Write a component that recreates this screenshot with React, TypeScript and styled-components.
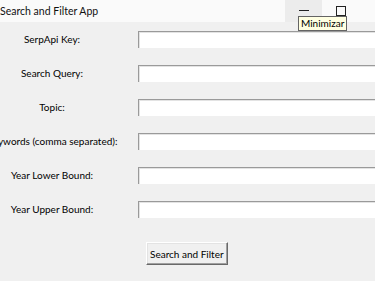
import * as React from "react";
import styled, { createGlobalStyle } from "styled-components";

const Global = createGlobalStyle`
  html, body {
    margin: 0;
    padding: 0;
    background: #f0f0f0;
    overflow: hidden;
  }
  body {
    font-family: Lato, "Noto Sans", sans-serif;
    font-size: 10px;
    color: #000;
  }
`;

const Window = styled.div`
  width: 375px;
  height: 281px;
  display: flex;
  flex-direction: column;
  background: #f0f0f0;
  overflow: hidden;
`;

const TitleBar = styled.div`
  position: relative;
  height: 22px;
  flex: none;
  display: flex;
  align-items: center;
  background: #fafafa;
`;

const Title = styled.div`
  width: 285px;
  flex: none;
  font-size: 10.5px;
  color: #111;
  white-space: nowrap;
`;

const CtrlButton = styled.div<{ $hover?: boolean }>`
  width: 37px;
  height: 22px;
  flex: none;
  display: flex;
  align-items: center;
  justify-content: center;
  background: ${(p) => (p.$hover ? "#ececec" : "transparent")};
`;

const Tooltip = styled.div`
  position: absolute;
  left: 298px;
  top: 16px;
  padding: 0 2px;
  height: 13px;
  line-height: 12px;
  font-size: 10px;
  background: #ffffe1;
  border: 1px solid #646464;
  white-space: nowrap;
  z-index: 2;
`;

const Form = styled.div`
  display: grid;
  grid-template-columns: 104px 1fr;
  column-gap: 34px;
  row-gap: 17px;
  padding-top: 9px;
  align-items: center;
`;

const Label = styled.div`
  white-space: nowrap;
  display: flex;
  justify-content: center;
  height: 17px;
  line-height: 17px;
`;

const Entry = styled.div`
  height: 17px;
  box-sizing: border-box;
  background: #fff;
  border-top: 1px solid #9a9a9a;
  border-left: 1px solid #9a9a9a;
  box-shadow: inset 1px 1px 0 #e3e3e3;
  width: 260px;
`;

const Actions = styled.div`
  display: flex;
  padding-top: 24px;
  padding-left: 146px;
`;

const Button = styled.div`
  box-sizing: border-box;
  height: 23px;
  padding: 0 3px;
  display: flex;
  align-items: center;
  background: #f0f0f0;
  border-top: 1px solid #fff;
  border-left: 1px solid #fff;
  border-right: 1px solid #696969;
  border-bottom: 1px solid #696969;
  box-shadow: inset -1px -1px 0 #a0a0a0, inset 1px 1px 0 #e3e3e3;
  white-space: nowrap;
`;

const fields = [
  "SerpApi Key:",
  "Search Query:",
  "Topic:",
  "Keywords (comma separated):",
  "Year Lower Bound:",
  "Year Upper Bound:",
];

export default function App() {
  return (
    <Window>
      <Global />
      <TitleBar>
        <Title>Search and Filter App</Title>
        <CtrlButton $hover>
          <svg width="10" height="10" viewBox="0 0 10 10">
            <line x1="0" y1="4.5" x2="10" y2="4.5" stroke="#222" strokeWidth="1" />
          </svg>
        </CtrlButton>
        <CtrlButton>
          <svg width="10" height="10" viewBox="0 0 10 10">
            <rect x="0.5" y="0.5" width="9" height="9" fill="none" stroke="#222" strokeWidth="1" />
          </svg>
        </CtrlButton>
        <CtrlButton />
        <Tooltip>Minimizar</Tooltip>
      </TitleBar>
      <Form>
        {fields.map((f) => (
          <React.Fragment key={f}>
            <Label>{f}</Label>
            <Entry />
          </React.Fragment>
        ))}
      </Form>
      <Actions>
        <Button>Search and Filter</Button>
      </Actions>
    </Window>
  );
}
